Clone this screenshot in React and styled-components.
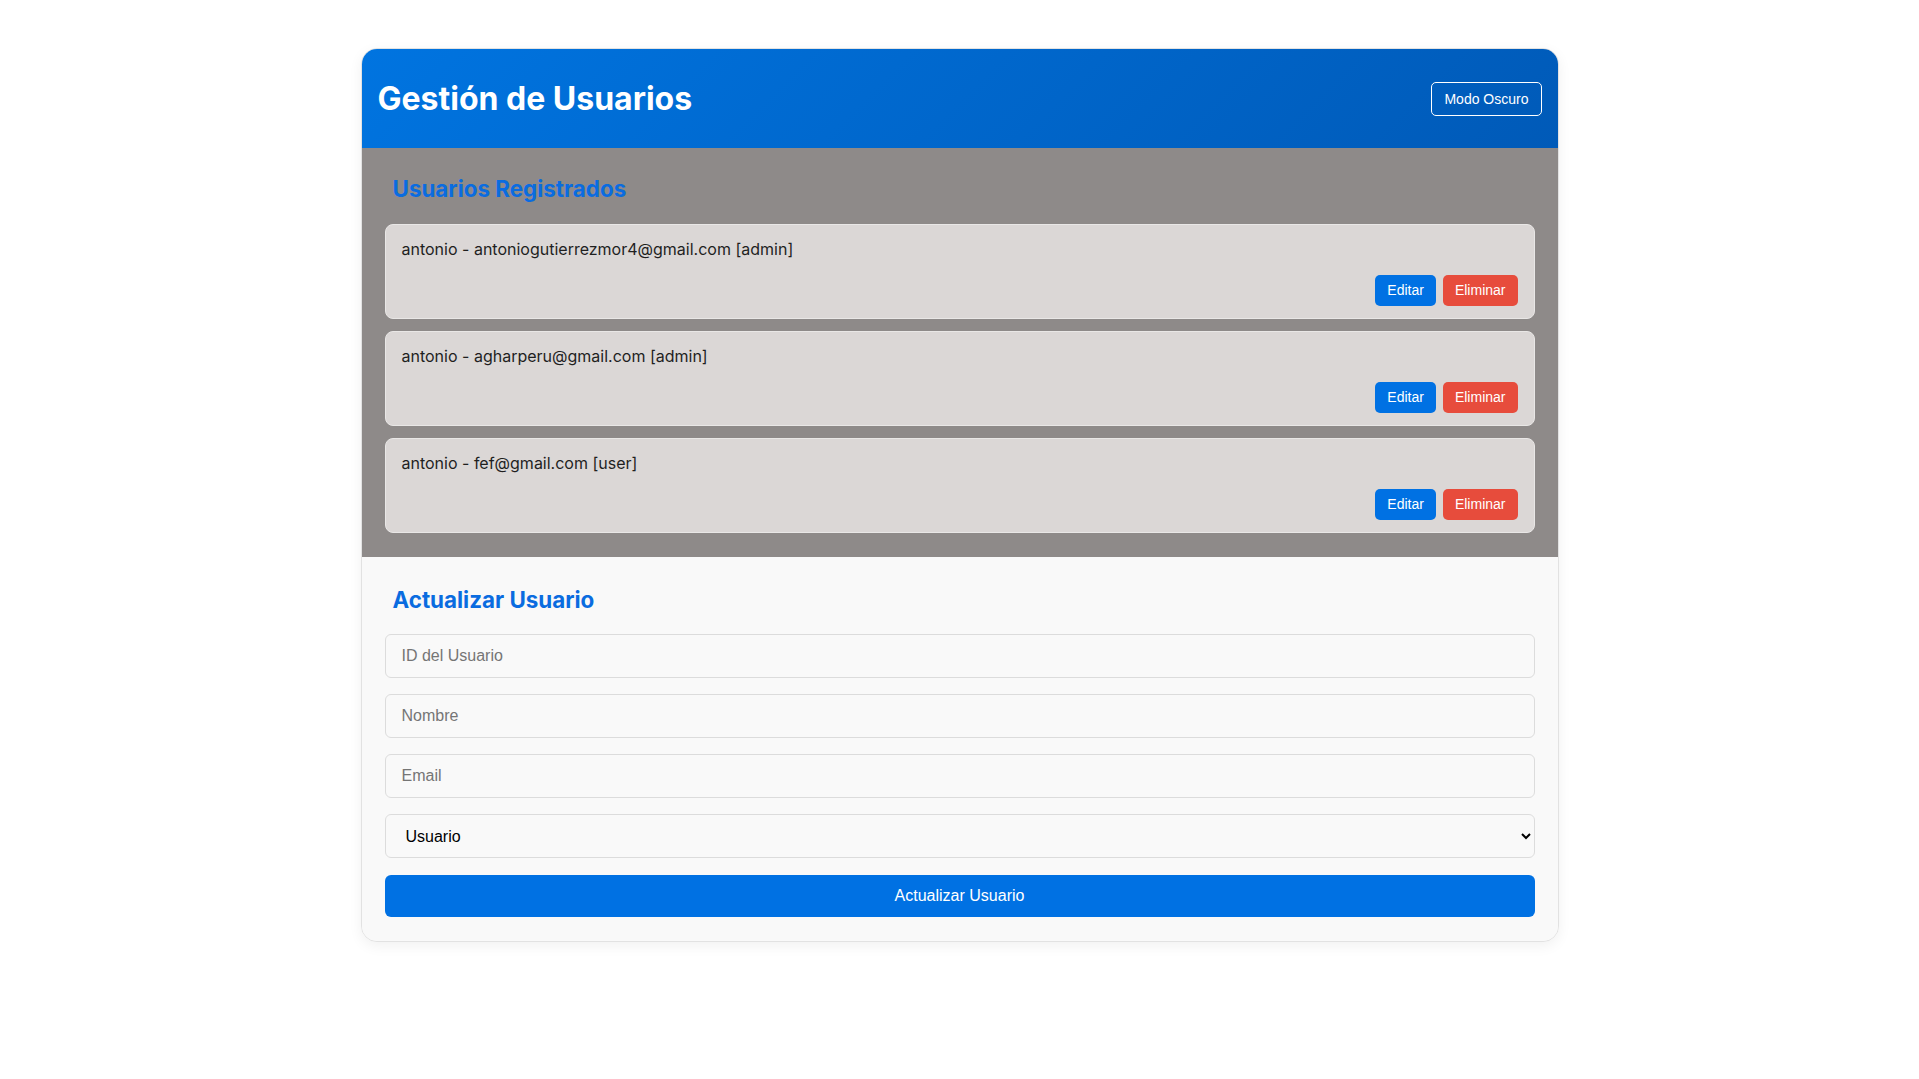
import React, { useState } from "react";
import styled, { createGlobalStyle } from "styled-components";

const GlobalStyle = createGlobalStyle`
  body {
    margin: 0;
    background: #ffffff;
    font-family: Inter, "Noto Sans", sans-serif;
    color: #222;
  }
`;

const Page = styled.div`
  padding: 48px 0;
`;

const Card = styled.div`
  width: 1198px;
  margin: 0 auto;
  box-sizing: border-box;
  background: #f9f9f9;
  border: 1px solid #e2e2e2;
  border-radius: 16px;
  overflow: hidden;
  box-shadow: 0 4px 14px rgba(0, 0, 0, 0.06);
`;

const Header = styled.header`
  height: 99px;
  display: flex;
  align-items: center;
  justify-content: space-between;
  padding: 0 16px;
  background: linear-gradient(135deg, #0074e0, #005ab8);
`;

const Title = styled.h1`
  margin: 0;
  color: #fff;
  font-size: 32px;
  font-weight: 700;
`;

const ThemeButton = styled.button`
  font-family: "Liberation Sans", Arial, sans-serif;
  font-size: 14px;
  line-height: 16px;
  padding: 8px 12px;
  color: #fff;
  background: transparent;
  border: 1px solid #fff;
  border-radius: 5px;
  cursor: pointer;
`;

const Section = styled.section`
  padding: 24px 23px;
  background: ${(p) => p.bg || "#f9f9f9"};
`;

const SectionTitle = styled.h2`
  margin: ${(p) => (p.form ? "5px 0 21px" : "3px 0 22px")};
  padding: 0 8px;
  font-size: 22.4px;
  font-weight: 700;
  color: #0a6ce0;
`;

const List = styled.div`
  display: flex;
  flex-direction: column;
  gap: 12px;
`;

const Item = styled.div`
  background: #dbd7d6;
  border: 1px solid #e9e7e6;
  border-radius: 8px;
  padding: 12px 16px;
`;

const ItemText = styled.div`
  font-size: 16px;
  line-height: 24px;
  color: #1f1f1f;
`;

const Actions = styled.div`
  display: flex;
  justify-content: flex-end;
  gap: 7px;
  margin-top: 14px;
`;

const SmallButton = styled.button`
  font-family: "Liberation Sans", Arial, sans-serif;
  font-size: 14px;
  line-height: 17px;
  padding: 7px 12px;
  border: none;
  border-radius: 5px;
  color: #fff;
  background: ${(p) => (p.danger ? "#e74c3c" : "#0071e3")};
  cursor: pointer;
`;

const Form = styled.form`
  display: flex;
  flex-direction: column;
  gap: 16px;
`;

const Input = styled.input`
  box-sizing: border-box;
  height: 44px;
  padding: 0 16px;
  font-family: "Liberation Sans", Arial, sans-serif;
  font-size: 16px;
  background: #f9f9f9;
  border: 1px solid #dcdcdc;
  border-radius: 6px;
  color: #222;
  &::placeholder {
    color: #757575;
  }
`;

const Select = styled.select`
  box-sizing: border-box;
  height: 44px;
  padding: 0 12px 0 16px;
  font-family: "Liberation Sans", Arial, sans-serif;
  font-size: 16px;
  background: #f9f9f9;
  border: 1px solid #dcdcdc;
  border-radius: 6px;
  color: #000;
`;

const SubmitButton = styled.button`
  height: 42px;
  margin-top: 1px;
  font-family: "Liberation Sans", Arial, sans-serif;
  font-size: 16px;
  color: #fff;
  background: #0071e3;
  border: none;
  border-radius: 6px;
  cursor: pointer;
`;

const users = [
  { name: "antonio", email: "antoniogutierrezmor4@gmail.com", role: "admin" },
  { name: "antonio", email: "agharperu@gmail.com", role: "admin" },
  { name: "antonio", email: "fef@gmail.com", role: "user" },
];

const App = () => {
  const [role, setRole] = useState("user");

  return (
    <>
      <GlobalStyle />
      <Page>
        <Card>
          <Header>
            <Title>Gestión de Usuarios</Title>
            <ThemeButton>Modo Oscuro</ThemeButton>
          </Header>
          <Section bg="#8e8a89">
            <SectionTitle>Usuarios Registrados</SectionTitle>
            <List>
              {users.map((u) => (
                <Item key={u.email}>
                  <ItemText>
                    {u.name} - {u.email} [{u.role}]
                  </ItemText>
                  <Actions>
                    <SmallButton>Editar</SmallButton>
                    <SmallButton danger>Eliminar</SmallButton>
                  </Actions>
                </Item>
              ))}
            </List>
          </Section>
          <Section>
            <SectionTitle form>Actualizar Usuario</SectionTitle>
            <Form onSubmit={(e) => e.preventDefault()}>
              <Input placeholder="ID del Usuario" />
              <Input placeholder="Nombre" />
              <Input placeholder="Email" />
              <Select value={role} onChange={(e) => setRole(e.target.value)}>
                <option value="user">Usuario</option>
                <option value="admin">Administrador</option>
              </Select>
              <SubmitButton type="submit">Actualizar Usuario</SubmitButton>
            </Form>
          </Section>
        </Card>
      </Page>
    </>
  );
};

export default App;
